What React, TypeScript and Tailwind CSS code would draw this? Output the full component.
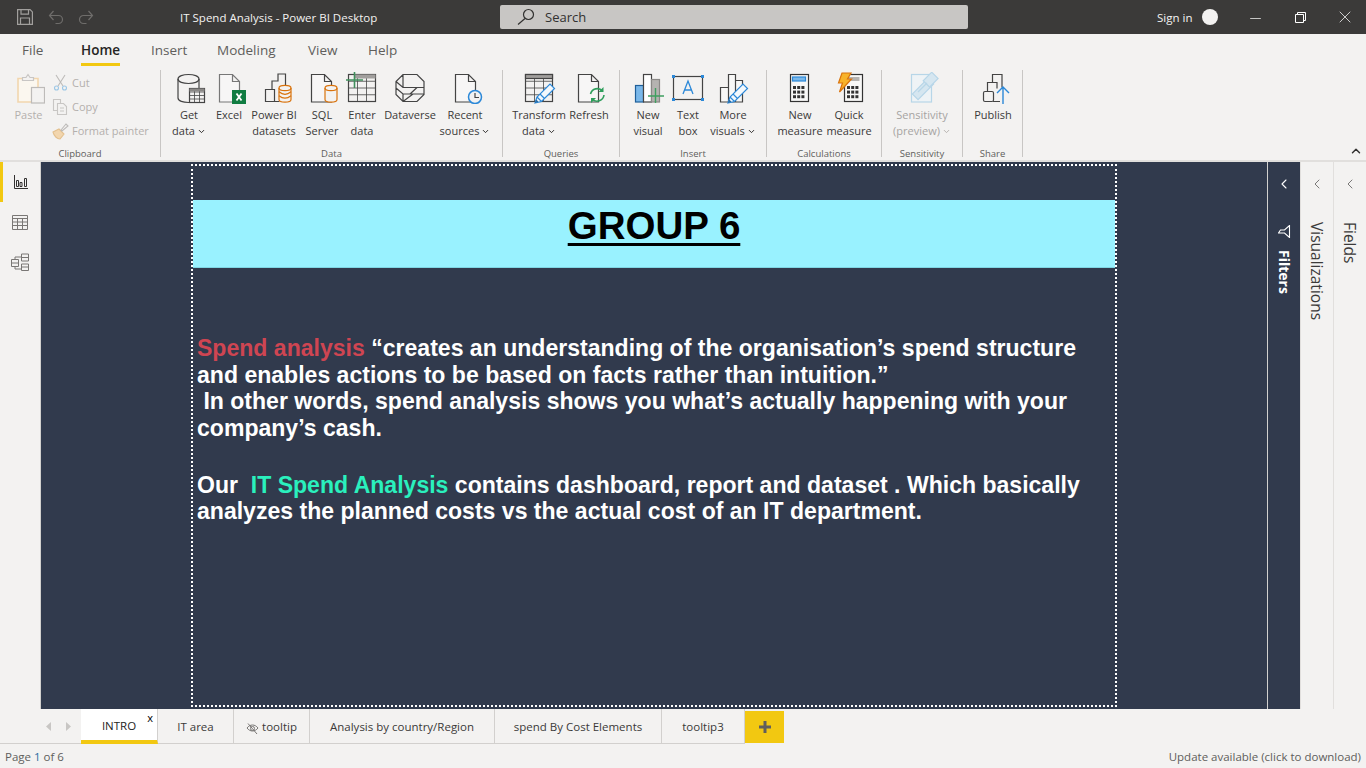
import type React from "react";
import { ChevronDown, ChevronLeft, ChevronUp, Minus, X } from "lucide-react";

const UI_FONT = "font-['Open_Sans','Noto_Sans',sans-serif]";

const ink = "#444";

function Ic({ children, w = 36 }: { children: React.ReactNode; w?: number }) {
  return (
    <svg width={w} height="32" viewBox={`0 0 ${w} 32`} fill="none" strokeWidth="1.2">
      {children}
    </svg>
  );
}

function Doc({ x = 8, color = ink }: { x?: number; color?: string }) {
  return (
    <path
      d={`M${x + 0.5} 2.5h13l7 7v20.5h-20z M${x + 13.5} 2.5v7h7`}
      stroke={color}
      fill="#fff"
      fillOpacity="0.35"
    />
  );
}

function Grid({ x, y, w, h, cols, rows, color = ink }: { x: number; y: number; w: number; h: number; cols: number; rows: number; color?: string }) {
  const lines = [];
  for (let i = 1; i < cols; i++) {
    const lx = x + (w * i) / cols;
    lines.push(<line key={`c${i}`} x1={lx} x2={lx} y1={y} y2={y + h} stroke={color} strokeWidth="0.8" />);
  }
  for (let i = 1; i < rows; i++) {
    const ly = y + (h * i) / rows;
    lines.push(<line key={`r${i}`} x1={x} x2={x + w} y1={ly} y2={ly} stroke={color} strokeWidth="0.8" />);
  }
  return (
    <g>
      <rect x={x} y={y} width={w} height={h} stroke={color} fill="#f3f2f1" />
      {lines}
    </g>
  );
}

function Cyl({ x, y, w, h, color = "#d9730d", bands = 2 }: { x: number; y: number; w: number; h: number; color?: string; bands?: number }) {
  const ry = 2.5;
  const arcs = [];
  for (let i = 1; i <= bands; i++) {
    const ay = y + ((h - ry) * i) / (bands + 1);
    arcs.push(<path key={i} d={`M${x} ${ay}q${w / 2} ${ry * 2} ${w} 0`} stroke={color} />);
  }
  return (
    <g>
      <path
        d={`M${x} ${y}c0 -${ry * 1.4} ${w} -${ry * 1.4} ${w} 0v${h - ry}c0 ${ry * 1.4} -${w} ${ry * 1.4} -${w} 0z`}
        stroke={color}
        fill="#f3f2f1"
      />
      <path d={`M${x} ${y}c0 ${ry * 1.4} ${w} ${ry * 1.4} ${w} 0`} stroke={color} />
      {arcs}
    </g>
  );
}

function Pencil({ x, y }: { x: number; y: number }) {
  return (
    <g transform={`translate(${x} ${y})`}>
      <path d="M0 20l2 -6 L15 1l4.5 4.5 L6.5 18.5z" fill="#f3f8fc" stroke="#2b88d8" />
      <path d="M2 14l4.5 4.5 M5 11l4.5 4.5" stroke="#2b88d8" />
      <path d="M0 20l1.2 -3.6 2.4 2.4z" fill="#2b6ca3" />
    </g>
  );
}

const GetDataIcon = () => (
  <Ic>
    <path d="M7 7c0 -6 21 -6 21 0v19c0 6 -21 6 -21 0z" stroke={ink} />
    <path d="M7 7c0 6 21 6 21 0" stroke={ink} />
    <Grid x={18.5} y={16.5} w={15} h={14} cols={3} rows={4} />
    <rect x="18.5" y="16.5" width="15" height="3" fill="#8a8886" />
  </Ic>
);

const ExcelIcon = () => (
  <Ic>
    <Doc x={8} color="#777" />
    <rect x="21" y="18" width="14" height="14" fill="#107c41" />
    <path d="M25.5 21.5l5 7 M30.5 21.5l-5 7" stroke="#fff" strokeWidth="1.8" />
  </Ic>
);

const PbiIcon = () => (
  <Ic>
    <path d="M9.5 17.5h9v12h-9z M16 17v-8h6v-7h7.5v13 M18.5 29.5h5" stroke={ink} fill="none" />
    <Cyl x={23} y={16} w={12} h={14} />
  </Ic>
);

const SqlIcon = () => (
  <Ic>
    <Doc x={7} />
    <Cyl x={21} y={16} w={12} h={14} bands={0} />
  </Ic>
);

const EnterIcon = () => (
  <Ic>
    <Grid x={4.5} y={2.5} w={27} h={27} cols={3} rows={4} />
    <rect x="10" y="2.5" width="21.5" height="4" fill="#a19f9d" />
    <path d="M2 8h17 M10.5 0v16" stroke="#3f8f5b" strokeWidth="1.6" />
  </Ic>
);

const DataverseIcon = () => (
  <Ic>
    <path
      d="M11 2.5h14l7 7v13l-7 7h-14l-7 -7v-13z M4 9.5l7 6h21 M11 2.5v13 M4 16l7 6h21 M11 22v7.5 M11 29.5l10 -7.5 M18 22l7 -6.5"
      stroke={ink}
    />
  </Ic>
);

const RecentIcon = () => (
  <Ic>
    <Doc x={8} />
    <circle cx="28" cy="25" r="6.5" stroke="#2b88d8" strokeWidth="1.5" fill="#f3f2f1" />
    <path d="M28 21v4.5h4" stroke="#444" />
  </Ic>
);

const TransformIcon = () => (
  <Ic>
    <Grid x={4.5} y={2.5} w={27} h={27} cols={3} rows={4} />
    <rect x="4.5" y="2.5" width="27" height="4" fill="#a19f9d" stroke={ink} />
    <Pencil x={14} y={11} />
  </Ic>
);

const RefreshIcon = () => (
  <Ic>
    <Doc x={7} />
    <g stroke="#2e9e5b" strokeWidth="1.6" fill="none">
      <path d="M19.5 22a7 7 0 0 1 12 -3" />
      <path d="M33 23a7 7 0 0 1 -12 4" />
    </g>
    <path d="M32.5 15v5h-5z M20 31v-5h5z" fill="#2e9e5b" />
  </Ic>
);

const NewVisualIcon = () => (
  <Ic>
    <rect x="5.5" y="13.5" width="8" height="16.5" fill="#7ab8ea" stroke="#1f5f99" />
    <rect x="13.5" y="2.5" width="8" height="27.5" fill="#fff" stroke={ink} />
    <rect x="21.5" y="7.5" width="8" height="22.5" fill="#b5b3b1" stroke="#8a8886" />
    <path d="M18 24h16 M25.5 16v15" stroke="#3f9f5f" strokeWidth="1.4" />
  </Ic>
);

const TextBoxIcon = () => (
  <Ic>
    <rect x="3.5" y="4.5" width="29" height="23" stroke={ink} />
    <g fill="#2b88d8">
      <rect x="2" y="3" width="3" height="3" />
      <rect x="31" y="3" width="3" height="3" />
      <rect x="2" y="26" width="3" height="3" />
      <rect x="31" y="26" width="3" height="3" />
    </g>
    <path d="M13 22l5 -13 5 13 M14.5 18h7" stroke="#2b88d8" strokeWidth="1.3" />
  </Ic>
);

const MoreVisualsIcon = () => (
  <Ic>
    <path d="M5.5 15.5h8v14.5h-8z M13.5 2.500h7v27.5h-7z M20.5 8.500h7v21.5h-7z" stroke={ink} fill="#f8f8f7" />
    <Pencil x={13} y={11} />
  </Ic>
);

function Calc({ x, y = 2 }: { x: number; y?: number }) {
  const dots = [];
  for (let r = 0; r < 3; r++) {
    for (let c = 0; c < 3; c++) {
      dots.push(<rect key={`${r}-${c}`} x={x + 3 + c * 4.2} y={y + 12 + r * 4.6} width="3" height="3" fill="#333" />);
    }
  }
  return (
    <g>
      <rect x={x + 0.5} y={y + 0.5} width="18" height="27" stroke="#333" fill="#f8f8f7" />
      {dots}
    </g>
  );
}

const NewMeasureIcon = () => (
  <Ic>
    <Calc x={8} />
    <rect x="10.5" y="5" width="13" height="4" fill="#7ab8ea" stroke="#2b88d8" />
  </Ic>
);

const QuickMeasureIcon = () => (
  <Ic>
    <Calc x={13} />
    <rect x="15.5" y="5" width="13" height="4" fill="#b5b3b1" />
    <path d="M11 1h9l-3.5 6h4l-12 13 3 -9h-4z" fill="#f7b32b" stroke="#d9730d" />
  </Ic>
);

const SensitivityIcon = () => (
  <Ic>
    <rect x="7.5" y="2.5" width="20" height="27.5" stroke="#b7d6e8" fill="#eef3f6" />
    <g stroke="#b7d6e8" fill="#d5e6f0">
      <rect x="8" y="13" width="22" height="8" transform="rotate(-45 19 17)" />
      <rect x="21" y="3" width="12" height="9" transform="rotate(-45 27 8)" />
    </g>
    <path d="M14 20l9 -9" stroke="#b7d6e8" />
  </Ic>
);

const PublishIcon = () => (
  <Ic>
    <rect x="8.5" y="19.5" width="10" height="10" rx="1.5" stroke={ink} />
    <path d="M12.5 19v-8.5h9.5v6 M17.5 10v-7.5h9.5v13 M18 29.5h7" stroke={ink} />
    <path d="M28 32v-16 M22 21l6 -6 6 6" stroke="#2b88d8" strokeWidth="1.4" />
  </Ic>
);

function Chev({ light }: { light?: boolean }) {
  return <ChevronDown className={light ? "text-[#b3b0ad]" : "text-[#252423]"} size={9} strokeWidth={2.5} />;
}

function Item({
  w,
  icon,
  lines,
  chevron,
  disabled,
}: {
  w: string;
  icon: React.ReactNode;
  lines: string[];
  chevron?: boolean;
  disabled?: boolean;
}) {
  return (
    <div className={`${w} flex flex-col items-center pt-[2px] shrink-0`}>
      <div className="h-[32px] flex justify-center">{icon}</div>
      <div className={`mt-[3px] text-[11px] leading-[16px] text-center whitespace-nowrap ${disabled ? "text-[#a6a4a2]" : "text-[#3b3a39]"}`}>
        {lines.map((line, i) => (
          <div key={line} className="flex items-center justify-center gap-[2px]">
            {line}
            {chevron && i === lines.length - 1 && <Chev light={disabled} />}
          </div>
        ))}
      </div>
    </div>
  );
}

function Group({ w, label, pl, children }: { w: string; label: string; pl: string; children: React.ReactNode }) {
  return (
    <div className={`${w} h-[87px] border-r border-[#c8c6c4] flex flex-col shrink-0`}>
      <div className={`h-[77px] flex ${pl}`}>{children}</div>
      <div className="h-[14px] -mb-1 text-[9.5px] leading-[14px] text-center text-[#605e5c]">{label}</div>
    </div>
  );
}

function SmallAction({ icon, label }: { icon: React.ReactNode; label: string }) {
  return (
    <div className="h-[24px] flex items-center gap-[3px] text-[11px] text-[#b3b0ad] whitespace-nowrap">
      <svg width="17" height="18" viewBox="0 0 17 18" fill="none" strokeWidth="1.1">
        {icon}
      </svg>
      {label}
    </div>
  );
}

function Ribbon() {
  return (
    <div className="h-[96px] bg-[#f3f2f1] border-b-2 border-[#e1dfdd] pt-[4px] flex">
      <Group w="w-[161px]" label="Clipboard" pl="pl-[11px]">
        <div className="w-[35px] flex flex-col items-center pt-[2px]">
          <svg width="32" height="32" viewBox="0 0 32 32" fill="none" strokeWidth="1.2">
            <path d="M5 6.500h20v23.500h-20z" stroke="#f2d6ae" strokeWidth="1.6" fill="#fbf7ef" />
            <path d="M9.500 8.500v-3h3.500l2 -3 2 3h3.500v3z" stroke="#c8c6c4" fill="#f3f2f1" />
            <rect x="18.5" y="15.5" width="13" height="15.5" stroke="#bdbbb9" fill="#f3f2f1" />
          </svg>
          <div className="mt-[3px] text-[11px] leading-[16px] text-[#b3b0ad]">Paste</div>
        </div>
        <div className="ml-[6px] pt-[1px]">
          <SmallAction
            label="Cut"
            icon={
              <>
                <path d="M4 1l7 11 M13 1l-7 11" stroke="#bdbbb9" />
                <circle cx="4.5" cy="14" r="2" stroke="#9cc7e6" />
                <circle cx="12.5" cy="14" r="2" stroke="#9cc7e6" />
              </>
            }
          />
          <SmallAction
            label="Copy"
            icon={
              <>
                <path d="M1.5 1.500h7v11h-7z" stroke="#c8c6c4" />
                <path d="M5.5 5.500h6l3 3v8h-9z M8 10h4 M8 13h4" stroke="#c8c6c4" fill="#f3f2f1" />
              </>
            }
          />
          <SmallAction
            label="Format painter"
            icon={
              <>
                <path d="M1 10l6 -3 5 5 -4 5c-3 0 -6 -3 -7 -7z" fill="#f2d6ae" stroke="#e3c08e" />
                <path d="M9 8l5 -6 2 2 -6 5z" stroke="#bdbbb9" />
              </>
            }
          />
        </div>
      </Group>
      <Group w="w-[342px]" label="Data" pl="pl-[8px]">
        <Item w="w-[40px]" icon={<GetDataIcon />} lines={["Get", "data"]} chevron />
        <Item w="w-[40px]" icon={<ExcelIcon />} lines={["Excel"]} />
        <Item w="w-[50px]" icon={<PbiIcon />} lines={["Power BI", "datasets"]} />
        <Item w="w-[46px]" icon={<SqlIcon />} lines={["SQL", "Server"]} />
        <Item w="w-[34px]" icon={<EnterIcon />} lines={["Enter", "data"]} />
        <Item w="w-[62px]" icon={<DataverseIcon />} lines={["Dataverse"]} />
        <Item w="w-[48px]" icon={<RecentIcon />} lines={["Recent", "sources"]} chevron />
      </Group>
      <Group w="w-[117px]" label="Queries" pl="pl-[10px]">
        <Item w="w-[52px]" icon={<TransformIcon />} lines={["Transform", "data"]} chevron />
        <Item w="w-[48px]" icon={<RefreshIcon />} lines={["Refresh"]} />
      </Group>
      <Group w="w-[147px]" label="Insert" pl="pl-[8px]">
        <Item w="w-[40px]" icon={<NewVisualIcon />} lines={["New", "visual"]} />
        <Item w="w-[40px]" icon={<TextBoxIcon />} lines={["Text", "box"]} />
        <Item w="w-[50px]" icon={<MoreVisualsIcon />} lines={["More", "visuals"]} chevron />
      </Group>
      <Group w="w-[115px]" label="Calculations" pl="pl-[9px]">
        <Item w="w-[48px]" icon={<NewMeasureIcon />} lines={["New", "measure"]} />
        <Item w="w-[50px]" icon={<QuickMeasureIcon />} lines={["Quick", "measure"]} />
      </Group>
      <Group w="w-[81px]" label="Sensitivity" pl="pl-0">
        <Item w="w-[80px]" icon={<SensitivityIcon />} lines={["Sensitivity", "(preview)"]} chevron disabled />
      </Group>
      <Group w="w-[60px]" label="Share" pl="pl-0">
        <Item w="w-[60px]" icon={<PublishIcon />} lines={["Publish"]} />
      </Group>
      <div className="flex-1 flex items-end justify-end pr-[3px] pb-[2px]">
        <ChevronUp size={14} strokeWidth={2.5} className="text-[#323130]" />
      </div>
    </div>
  );
}

function TitleBar() {
  return (
    <div className="h-[34px] bg-[#3b3a39] flex items-center text-white text-[11.5px] shrink-0">
      <div className="w-[500px] flex items-center pl-[17px]">
        <svg width="16" height="16" viewBox="0 0 16 16" fill="none" stroke="#a19f9d" strokeWidth="1.2">
          <path d="M.6.6h12.5l2.3 2.3v12.5h-14.8z M4 .6v4.500h7.5v-4.500 M3.5 15.400v-6.400h9v6.400" />
        </svg>
        <svg className="ml-[15px]" width="16" height="16" viewBox="0 0 16 16" fill="none" stroke="#6f6d6b" strokeWidth="1.2">
          <path d="M1.5 6.500h9a4 4 0 0 1 0 8h-3 M5.5 2l-4 4.500 4 4.500" />
        </svg>
        <svg className="ml-[14px]" width="16" height="16" viewBox="0 0 16 16" fill="none" stroke="#6f6d6b" strokeWidth="1.2">
          <path d="M14.5 6.500h-9a4 4 0 0 0 0 8h3 M10.5 2l4 4.500 -4 4.500" />
        </svg>
        <div className="ml-[86px] mt-[2px] text-[#f3f2f1]">IT Spend Analysis - Power BI Desktop</div>
      </div>
      <div className="w-[468px] h-[24px] bg-[#c8c6c4] rounded-[2px] flex items-center pl-[17px] text-[13px] text-[#323130]">
        <svg width="18" height="18" viewBox="0 0 18 18" fill="none" stroke="#323130" strokeWidth="1.2">
          <circle cx="11.5" cy="6.5" r="5" />
          <path d="M8 10.500l-7 6" />
        </svg>
        <span className="ml-[10px] mt-[1px]">Search</span>
      </div>
      <div className="flex-1 flex items-center">
        <span className="ml-[189px] mt-[1px] text-[#f3f2f1]">Sign in</span>
        <div className="ml-[10px] mb-[1px] w-[16px] h-[16px] rounded-full bg-[#f3f2f1]" />
        <Minus className="ml-[29px] mt-[2px]" size={17} strokeWidth={1} />
        <svg className="ml-[31px]" width="11" height="11" viewBox="0 0 11 11" fill="none" stroke="#fff">
          <path d="M.5 2.500h8v8h-8z M2.500 2.500v-2h8v8h-2" />
        </svg>
        <X className="ml-[29px]" size={20} strokeWidth={0.9} />
      </div>
    </div>
  );
}

function MenuBar() {
  return (
    <div className="h-[32px] bg-[#f3f2f1] flex text-[13.5px] text-[#605e5c] shrink-0">
      <div className="ml-[22px] w-[59px] leading-[32px]">File</div>
      <div className="w-[70px] relative leading-[32px] text-[#252423] font-semibold">
        Home
        <div className="absolute left-0 bottom-0 w-[39px] h-[3px] bg-[#f2c811]" />
      </div>
      <div className="w-[66px] leading-[32px]">Insert</div>
      <div className="w-[91px] leading-[32px]">Modeling</div>
      <div className="w-[60px] leading-[32px]">View</div>
      <div className="leading-[32px]">Help</div>
    </div>
  );
}

function LeftRail() {
  return (
    <div className="w-[41px] bg-[#f3f2f1] border-r border-[#d2d0ce] flex flex-col shrink-0">
      <div className="h-[40px] border-l-[3px] border-[#f2c811] flex items-center justify-center pr-[1px]">
        <svg width="14" height="14" viewBox="0 0 14 14" fill="none" stroke="#323130">
          <path d="M.5 0v13.500h13.500 M2.5 5.500h2v6h-2z M6 7.500h2v4h-2z M10.500 3.500h2v8h-2z" />
        </svg>
      </div>
      <div className="h-[40px] flex items-center justify-center">
        <svg width="16" height="15" viewBox="0 0 16 15" fill="none" stroke="#797775">
          <path d="M.5.5h15v14h-15z M.5 3.500h15 M.5 7h15 M.5 10.500h15 M5.500 3.500v11 M10.500 3.500v11" />
        </svg>
      </div>
      <div className="h-[40px] flex items-center justify-center">
        <svg width="18" height="18" viewBox="0 0 18 18" fill="none" stroke="#797775">
          <path d="M.5 6.500h7v7h-7z M.5 10h7 M10.500 1h7v7h-7z M10.500 4.500h7 M10.500 11h7v6.500h-7z M10.500 14h7 M4 6.500v-2.500h6.500 M4 13.500v2.500h6.500" />
        </svg>
      </div>
    </div>
  );
}

function Page() {
  return (
    <div className="ml-[150px] mt-[2px] w-[926px] h-[543px] border-2 border-dotted border-white font-['Liberation_Sans',Arial,sans-serif] font-bold">
      <div className="mt-[34px] h-[68px] bg-[#99f2ff] border-b border-[#7fd6e3] flex items-center justify-center pb-[15px]">
        <span className="text-[38.5px] text-black underline underline-offset-[4px] decoration-[3px]">GROUP 6</span>
      </div>
      <div className="mt-[67px] pl-[4px] text-white text-[23.05px] leading-[26.67px] whitespace-nowrap">
        <p>
          <span className="text-[#cf4552]">Spend analysis</span> “creates an understanding of the organisation’s spend structure
        </p>
        <p>and enables actions to be based on facts rather than intuition.”</p>
        <p>&nbsp;In other words, spend analysis shows you what’s actually happening with your</p>
        <p>company’s cash.</p>
        <p className="mt-[30px]">
          Our&nbsp; <span className="text-[#2af0bd]">IT Spend Analysis</span> contains dashboard, report and dataset . Which basically
        </p>
        <p>analyzes the planned costs vs the actual cost of an IT department.</p>
      </div>
    </div>
  );
}

function SidePane({ label, dark, icon }: { label: string; dark?: boolean; icon?: React.ReactNode }) {
  return (
    <div
      className={`w-[33px] flex flex-col items-center border-l shrink-0 ${
        dark ? "bg-[#313a4d] border-[#d2d0ce] text-white" : "bg-[#f3f2f1] border-[#e1dfdd] text-[#3b3a39]"
      }`}
    >
      <ChevronLeft className="mt-[14px]" size={16} strokeWidth={dark ? 1.6 : 1} />
      <div className="h-[24px] mt-[27px] flex items-center">{icon}</div>
      <div className={`[writing-mode:vertical-rl] leading-[18px] ${dark ? "text-[14px] font-bold mt-[7px]" : "text-[15.5px] -mt-[21px]"}`}>
        {label}
      </div>
    </div>
  );
}

function Tab({ w, label, active, hidden }: { w: string; label: string; active?: boolean; hidden?: boolean }) {
  return (
    <div
      className={`${w} h-[35px] border-r border-[#d2d0ce] pt-[2px] flex items-center justify-center gap-[3px] whitespace-nowrap relative shrink-0 ${
        active ? "bg-white border-b-4 border-b-[#f2c811] text-[#252423]" : "border-b border-b-[#d2d0ce] text-[#3b3a39]"
      }`}
    >
      {hidden && (
        <svg width="13" height="13" viewBox="0 0 13 13" fill="none" stroke="#797775" className="mt-[3px]">
          <path d="M1 6c3 -4 8 -4 11 0c-3 4 -8 4 -11 0z M2 1.500l9 10.500" />
          <circle cx="6.5" cy="6.5" r="2" />
        </svg>
      )}
      {label}
      {active && <span className="absolute top-0 right-[4px] text-[11px] leading-[18px] text-black">x</span>}
    </div>
  );
}

function TabBar() {
  return (
    <div className="h-[35px] bg-[#f3f2f1] flex text-[11.5px] shrink-0">
      <div className="w-[81px] h-[35px] border-b border-[#d2d0ce] flex items-center pl-[46px] gap-[13px] shrink-0">
        <svg width="6" height="9" viewBox="0 0 6 9" fill="#c8c6c4">
          <path d="M5 0v9l-5 -4.500z" />
        </svg>
        <svg width="6" height="9" viewBox="0 0 6 9" fill="#c8c6c4">
          <path d="M1 0v9l5 -4.500z" />
        </svg>
      </div>
      <Tab w="w-[77px]" label="INTRO" active />
      <Tab w="w-[76px]" label="IT area" />
      <Tab w="w-[76px]" label="tooltip" hidden />
      <Tab w="w-[185px]" label="Analysis by country/Region" />
      <Tab w="w-[167px]" label="spend By Cost Elements" />
      <Tab w="w-[83px]" label="tooltip3" />
      <div className="h-[35px] pt-[2px]">
        <div className="w-[39px] h-[32px] bg-[#f2c811] flex items-center justify-center">
          <svg width="12" height="12" viewBox="0 0 12 12" fill="#605e5c">
            <path d="M4.5 0h3v4.500h4.500v3h-4.500v4.500h-3v-4.500h-4.500v-3h4.500z" />
          </svg>
        </div>
      </div>
    </div>
  );
}

export default function App() {
  return (
    <div className={`w-[1366px] h-[768px] overflow-hidden flex flex-col bg-[#f3f2f1] ${UI_FONT}`}>
      <TitleBar />
      <MenuBar />
      <Ribbon />
      <div className="h-[547px] flex shrink-0">
        <LeftRail />
        <div className="flex-1 bg-[#313a4d]">
          <Page />
        </div>
        <SidePane
          label="Filters"
          dark
          icon={
            <svg className="rotate-90" width="13" height="13" viewBox="0 0 13 13" fill="none" strokeWidth="1.1">
              <path d="M.5 1.500h12l-4.500 5v6l-3 -2v-4z" stroke="#fff" />
            </svg>
          }
        />
        <SidePane label="Visualizations" />
        <SidePane label="Fields" />
      </div>
      <TabBar />
      <div className="flex-1 flex items-center justify-between px-[5px] pt-[1px] text-[11.5px] text-[#605e5c]">
        <span>
          Page <span className="text-[#2b6ca3]">1</span> of 6
        </span>
        <span>Update available (click to download)</span>
      </div>
    </div>
  );
}
